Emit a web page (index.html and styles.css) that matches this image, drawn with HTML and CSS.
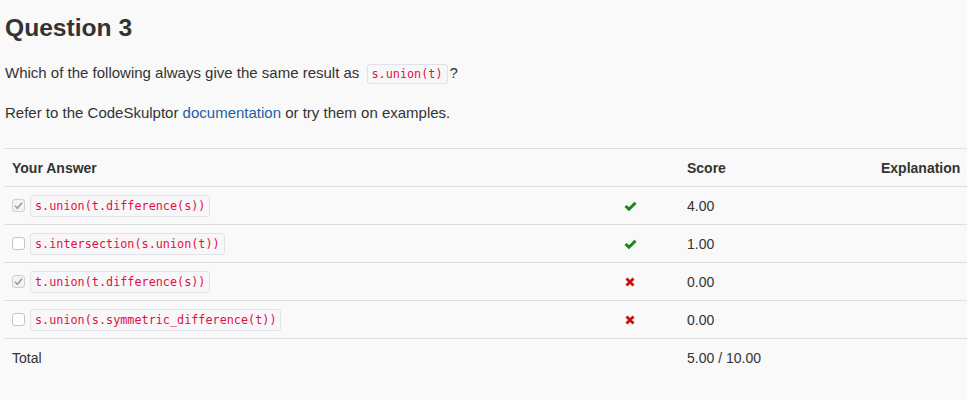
FILE: index.html
```html
<!DOCTYPE html>
<html>
<head>
<meta charset="utf-8">
<link rel="stylesheet" href="styles.css">
</head>
<body>
<div class="page">
  <h1 class="title">Question 3</h1>
  <p class="para">Which of the following always give the same result as <code class="code">s.union(t)</code>?</p>
  <p class="para">Refer to the CodeSkulptor <a class="link" href="#">documentation</a> or try them on examples.</p>

  <table class="results">
    <colgroup>
      <col class="c-answer">
      <col class="c-mark">
      <col class="c-score">
      <col class="c-expl">
    </colgroup>
    <thead>
      <tr>
        <th>Your Answer</th>
        <th></th>
        <th>Score</th>
        <th>Explanation</th>
      </tr>
    </thead>
    <tbody>
      <tr>
        <td><span class="box checked"><svg viewBox="0 0 13 13" width="13" height="13"><polyline points="3,6.8 5.4,9.2 10,3.8" fill="none" stroke="#9a9a9a" stroke-width="1.6"/></svg></span><code class="code">s.union(t.difference(s))</code></td>
        <td><svg class="mark" viewBox="0 0 13 10" width="13" height="10"><polyline points="1.5,5 5,8.2 11.5,1.7" fill="none" stroke="#15871b" stroke-width="3"/></svg></td>
        <td>4.00</td>
        <td></td>
      </tr>
      <tr>
        <td><span class="box"></span><code class="code">s.intersection(s.union(t))</code></td>
        <td><svg class="mark" viewBox="0 0 13 10" width="13" height="10"><polyline points="1.5,5 5,8.2 11.5,1.7" fill="none" stroke="#15871b" stroke-width="3"/></svg></td>
        <td>1.00</td>
        <td></td>
      </tr>
      <tr>
        <td><span class="box checked"><svg viewBox="0 0 13 13" width="13" height="13"><polyline points="3,6.8 5.4,9.2 10,3.8" fill="none" stroke="#9a9a9a" stroke-width="1.6"/></svg></span><code class="code">t.union(t.difference(s))</code></td>
        <td><svg class="mark" viewBox="0 0 13 10" width="13" height="10"><path d="M2.5 1.5 L9.5 8.5 M9.5 1.5 L2.5 8.5" fill="none" stroke="#c80f0f" stroke-width="2.8"/></svg></td>
        <td>0.00</td>
        <td></td>
      </tr>
      <tr>
        <td><span class="box"></span><code class="code">s.union(s.symmetric_difference(t))</code></td>
        <td><svg class="mark" viewBox="0 0 13 10" width="13" height="10"><path d="M2.5 1.5 L9.5 8.5 M9.5 1.5 L2.5 8.5" fill="none" stroke="#c80f0f" stroke-width="2.8"/></svg></td>
        <td>0.00</td>
        <td></td>
      </tr>
      <tr>
        <td>Total</td>
        <td></td>
        <td>5.00 / 10.00</td>
        <td></td>
      </tr>
    </tbody>
  </table>
</div>
</body>
</html>
```
FILE: styles.css
```css
html, body {
  margin: 0;
  padding: 0;
  background: #f9f9f9;
  overflow: hidden;
}

.page {
  padding: 0 0 0 4px;
  font-family: "Liberation Sans", Arial, sans-serif;
  font-size: 14px;
  line-height: 20px;
  color: #333;
}

.title {
  margin: 0;
  padding: 14px 0 0 1px;
  font-size: 24.6px;
  line-height: 28px;
  font-weight: bold;
  color: #333;
}

.para {
  margin: 20px 0 0 1px;
  font-size: 15px;
  line-height: 22px;
}

.para + .para {
  margin-top: 18px;
}

.link {
  color: #1f5fa6;
  text-decoration: none;
}

.code {
  font-family: "DejaVu Sans Mono", monospace;
  font-size: 11.8px;
  line-height: 16px;
  color: #e3103f;
  background: #f7f7f9;
  border: 1px solid #e1e1e8;
  border-radius: 3px;
  padding: 1px 4px;
  margin: 0 2px 0 3px;
  display: inline-block;
  vertical-align: middle;
}

.results {
  margin-top: 24px;
  width: 964px;
  border-collapse: collapse;
  table-layout: fixed;
}

.c-answer { width: 612px; }
.c-mark { width: 63px; }
.c-score { width: 194px; }
.c-expl { width: 95px; }

.results th,
.results td {
  padding: 0 8px;
  height: 37px;
  text-align: left;
  vertical-align: middle;
  border-top: 1px solid #dddddd;
  white-space: nowrap;
}

.results th {
  font-weight: bold;
}

.results td .code {
  padding: 2px 4px;
  margin-left: 5px;
}

.box {
  display: inline-block;
  vertical-align: middle;
  width: 11px;
  height: 11px;
  border: 1px solid #c4c4c4;
  border-radius: 3px;
  background: #ffffff;
  position: relative;
}

.box.checked {
  background: #f3f3f3;
  border-color: #cfcfcf;
}

.box svg {
  position: absolute;
  left: -1px;
  top: -1px;
}

.mark {
  display: block;
}
```
